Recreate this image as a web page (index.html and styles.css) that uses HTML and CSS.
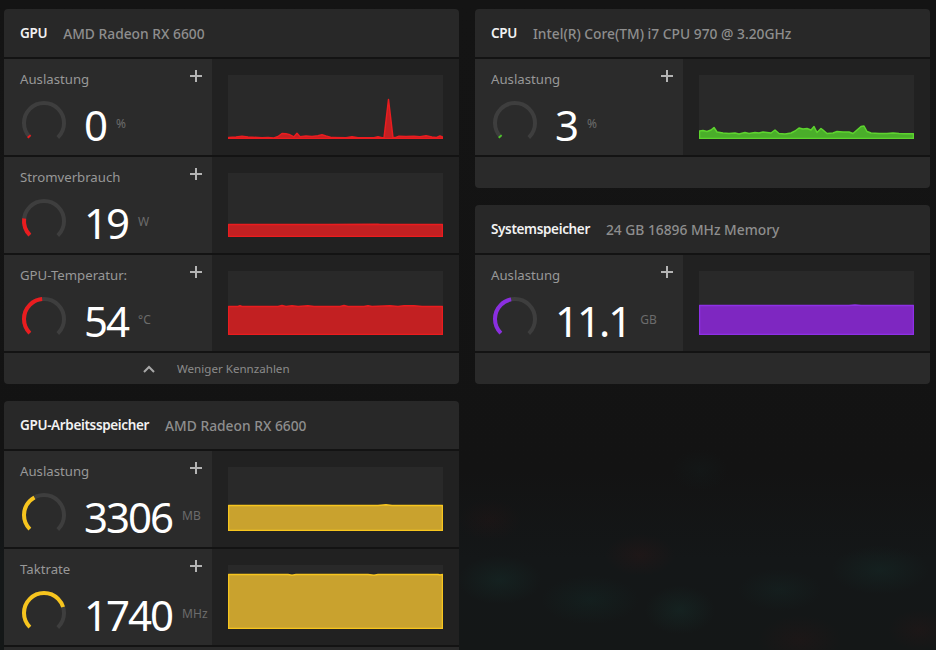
FILE: index.html
```html
<!DOCTYPE html>
<html lang="de">
<head>
<meta charset="utf-8">
<title>Leistung</title>
<link rel="stylesheet" href="styles.css">
</head>
<body>
<div class="dash">
  <div class="col">
    <section class="card">
      <header class="card-head"><span class="title">GPU</span><span class="sub">AMD Radeon RX 6600</span></header>
      <div class="metric red">
        <div class="m-left">
          <div class="m-top"><span class="m-label">Auslastung</span><svg class="plus" viewBox="0 0 12 12"><path d="M6 0v12M0 6h12"/></svg></div>
          <div class="m-val">
            <svg class="gauge" viewBox="0 0 48 48"><circle class="track" cx="24" cy="24" r="20"/><circle class="val" cx="24" cy="24" r="20" style="stroke-dasharray: 2 200"/></svg>
            <span class="num">0</span><span class="unit">%</span>
          </div>
        </div>
        <div class="m-chart"><div class="plot"><svg viewBox="0 0 215 64" preserveAspectRatio="none"><path class="area" d="M0.5,63.5 L0.5,62.5 L8,62 L14,61.3 L20,62 L34,62.8 L40,62.5 L46,63 L50,61.5 L54,58.5 L58,58.8 L62,59.8 L66,61.8 L69,58.3 L72,61.8 L78,61 L84,61.4 L90,60.8 L94,59.8 L98,61 L104,62.6 L118,62.8 L124,61.8 L130,62.8 L146,62.8 L150,61.8 L154,62.8 L156,62.8 L160.5,24.5 L165,62.8 L167,62.6 L171,61.2 L178,61.6 L186,61.2 L192,61.8 L198,60.8 L204,62 L208,62.6 L212,61 L214.5,62 L214.5,63.5 Z"/></svg></div></div>
      </div>
      <div class="metric red">
        <div class="m-left">
          <div class="m-top"><span class="m-label">Stromverbrauch</span><svg class="plus" viewBox="0 0 12 12"><path d="M6 0v12M0 6h12"/></svg></div>
          <div class="m-val">
            <svg class="gauge" viewBox="0 0 48 48"><circle class="track" cx="24" cy="24" r="20"/><circle class="val" cx="24" cy="24" r="20" style="stroke-dasharray: 18 200"/></svg>
            <span class="num">19</span><span class="unit">W</span>
          </div>
        </div>
        <div class="m-chart"><div class="plot"><svg viewBox="0 0 215 64" preserveAspectRatio="none"><path class="area" d="M0.5,63.5 L0.5,51.5 L60,51.5 L100,51.5 L150,51.2 L152,51.5 L214.5,51.5 L214.5,63.5 Z"/></svg></div></div>
      </div>
      <div class="metric red">
        <div class="m-left">
          <div class="m-top"><span class="m-label">GPU-Temperatur:</span><svg class="plus" viewBox="0 0 12 12"><path d="M6 0v12M0 6h12"/></svg></div>
          <div class="m-val">
            <svg class="gauge" viewBox="0 0 48 48"><circle class="track" cx="24" cy="24" r="20"/><circle class="val" cx="24" cy="24" r="20" style="stroke-dasharray: 45 200"/></svg>
            <span class="num">54</span><span class="unit">°C</span>
          </div>
        </div>
        <div class="m-chart"><div class="plot"><svg viewBox="0 0 215 64" preserveAspectRatio="none"><path class="area" d="M0.5,63.5 L0.5,35.5 L10,35.5 L12,34.8 L14,35.5 L50,35.5 L54,34.6 L58,35.5 L64,34.7 L70,35.5 L80,34.8 L86,35.5 L112,35.5 L116,34.6 L120,35.5 L136,35.5 L140,34.7 L144,35.5 L162,34.8 L170,35.5 L176,34.7 L186,34.8 L194,35.5 L214.5,35.5 L214.5,63.5 Z"/></svg></div></div>
      </div>
      <div class="card-foot more">
        <svg class="chev" viewBox="0 0 12 8"><path d="M1 7l5-5 5 5"/></svg>
        <span class="more-text">Weniger Kennzahlen</span>
      </div>
    </section>

    <section class="card">
      <header class="card-head"><span class="title">GPU-Arbeitsspeicher</span><span class="sub">AMD Radeon RX 6600</span></header>
      <div class="metric yellow">
        <div class="m-left">
          <div class="m-top"><span class="m-label">Auslastung</span><svg class="plus" viewBox="0 0 12 12"><path d="M6 0v12M0 6h12"/></svg></div>
          <div class="m-val">
            <svg class="gauge" viewBox="0 0 48 48"><circle class="track" cx="24" cy="24" r="20"/><circle class="val" cx="24" cy="24" r="20" style="stroke-dasharray: 37 200"/></svg>
            <span class="num">3306</span><span class="unit">MB</span>
          </div>
        </div>
        <div class="m-chart"><div class="plot"><svg viewBox="0 0 215 64" preserveAspectRatio="none"><path class="area" d="M0.5,63.5 L0.5,38.5 L150,38.5 L158,37.8 L164,38.5 L214.5,38.5 L214.5,63.5 Z"/></svg></div></div>
      </div>
      <div class="metric yellow">
        <div class="m-left">
          <div class="m-top"><span class="m-label">Taktrate</span><svg class="plus" viewBox="0 0 12 12"><path d="M6 0v12M0 6h12"/></svg></div>
          <div class="m-val">
            <svg class="gauge" viewBox="0 0 48 48"><circle class="track" cx="24" cy="24" r="20"/><circle class="val" cx="24" cy="24" r="20" style="stroke-dasharray: 72 200"/></svg>
            <span class="num">1740</span><span class="unit">MHz</span>
          </div>
        </div>
        <div class="m-chart"><div class="plot"><svg viewBox="0 0 215 64" preserveAspectRatio="none"><path class="area" d="M0.5,63.5 L0.5,9.5 L60,9.5 L64,10.2 L68,9.5 L140,9.5 L146,10.2 L150,9.5 L210,9.5 L212,10 L214.5,9.5 L214.5,63.5 Z"/></svg></div></div>
      </div>
      <div class="card-foot"></div>
    </section>
  </div>

  <div class="col">
    <section class="card">
      <header class="card-head"><span class="title">CPU</span><span class="sub">Intel(R) Core(TM) i7 CPU 970 @ 3.20GHz</span></header>
      <div class="metric green">
        <div class="m-left">
          <div class="m-top"><span class="m-label">Auslastung</span><svg class="plus" viewBox="0 0 12 12"><path d="M6 0v12M0 6h12"/></svg></div>
          <div class="m-val">
            <svg class="gauge" viewBox="0 0 48 48"><circle class="track" cx="24" cy="24" r="20"/><circle class="val" cx="24" cy="24" r="20" style="stroke-dasharray: 2 200"/></svg>
            <span class="num">3</span><span class="unit">%</span>
          </div>
        </div>
        <div class="m-chart"><div class="plot"><svg viewBox="0 0 215 64" preserveAspectRatio="none"><path class="area" d="M0.5,63.5 L0.5,56 L4,55.5 L8,56.5 L12,55 L15,52.5 L18,57 L24,58 L30,58.5 L36,58 L40,59 L46,57.5 L50,58.5 L56,57.5 L60,58 L64,57 L72,58 L76,55 L80,58.5 L86,59 L92,58 L96,56 L100,53 L104,54 L108,53.5 L112,55 L115,51.5 L118,57.5 L122,53.5 L124,55 L128,58.5 L134,58 L138,56.5 L144,57 L150,57 L154,58.5 L158,55 L162,51.5 L165,51 L168,56.5 L172,58 L180,58.5 L188,58.5 L194,58 L200,58.5 L206,58.8 L214.5,58.8 L214.5,63.5 Z"/></svg></div></div>
      </div>
      <div class="card-foot"></div>
    </section>

    <section class="card">
      <header class="card-head"><span class="title">Systemspeicher</span><span class="sub">24 GB 16896 MHz Memory</span></header>
      <div class="metric purple">
        <div class="m-left">
          <div class="m-top"><span class="m-label">Auslastung</span><svg class="plus" viewBox="0 0 12 12"><path d="M6 0v12M0 6h12"/></svg></div>
          <div class="m-val">
            <svg class="gauge" viewBox="0 0 48 48"><circle class="track" cx="24" cy="24" r="20"/><circle class="val" cx="24" cy="24" r="20" style="stroke-dasharray: 43 200"/></svg>
            <span class="num">11.1</span><span class="unit">GB</span>
          </div>
        </div>
        <div class="m-chart"><div class="plot"><svg viewBox="0 0 215 64" preserveAspectRatio="none"><path class="area" d="M0.5,63.5 L0.5,34.5 L150,34.5 L156,34.1 L162,34.5 L214.5,34.5 L214.5,63.5 Z"/></svg></div></div>
      </div>
      <div class="card-foot"></div>
    </section>
  </div>
</div>
</body>
</html>
```

FILE: styles.css
```css
html, body {
  margin: 0;
  height: 100%;
}

body {
  background-color: #131313;
  background-image:
    radial-gradient(ellipse 60px 35px at 500px 580px, rgba(22, 70, 62, 0.22), transparent 70%),
    radial-gradient(ellipse 70px 35px at 590px 600px, rgba(18, 62, 56, 0.2), transparent 70%),
    radial-gradient(ellipse 50px 35px at 680px 610px, rgba(24, 72, 64, 0.22), transparent 70%),
    radial-gradient(ellipse 60px 30px at 780px 590px, rgba(22, 66, 60, 0.16), transparent 70%),
    radial-gradient(ellipse 70px 35px at 880px 570px, rgba(22, 70, 62, 0.2), transparent 70%),
    radial-gradient(ellipse 50px 30px at 640px 555px, rgba(70, 22, 22, 0.2), transparent 70%),
    radial-gradient(ellipse 60px 35px at 800px 640px, rgba(70, 22, 22, 0.16), transparent 70%),
    radial-gradient(ellipse 45px 30px at 490px 520px, rgba(60, 20, 20, 0.16), transparent 70%),
    radial-gradient(ellipse 45px 30px at 920px 630px, rgba(70, 22, 22, 0.16), transparent 70%),
    radial-gradient(ellipse 40px 30px at 700px 470px, rgba(20, 40, 40, 0.18), transparent 70%),
    linear-gradient(to bottom, #141414 0, #131313 470px, #141718 560px, #141717 650px);
  font-family: "Noto Sans", "Open Sans", sans-serif;
  color: #e8e8e8;
  overflow: hidden;
}

.dash {
  display: flex;
  gap: 16px;
  padding: 9px 6px 0 4px;
}

.col {
  width: 455px;
  display: flex;
  flex-direction: column;
  gap: 17px;
}

.card {
  display: flex;
  flex-direction: column;
  gap: 2px;
  background: #131313;
  border-radius: 4px;
  overflow: hidden;
}

.card-head {
  height: 48px;
  background: #282828;
  display: flex;
  align-items: center;
  padding: 0 16px;
  gap: 16px;
  font-weight: 600;
}

.title {
  color: #f2f2f2;
  font-size: 13.5px;
  letter-spacing: -0.35px;
}

.sub {
  color: #8e8e8e;
  font-size: 13.8px;
  font-weight: 500;
}

.metric {
  height: 96px;
  display: flex;
}

.m-left {
  width: 208px;
  box-sizing: border-box;
  background: #2b2b2b;
  padding: 11px 10px 0 16px;
}

.m-top {
  display: flex;
  justify-content: space-between;
  align-items: flex-start;
  height: 18px;
}

.m-label {
  font-size: 13.2px;
  line-height: 18px;
  color: #989898;
}

.plus {
  width: 12px;
  height: 12px;
}

.plus path {
  stroke: #b4b4b4;
  stroke-width: 2;
  fill: none;
}

.m-val {
  display: flex;
  align-items: center;
  margin-top: 11px;
  height: 48px;
}

.gauge {
  width: 48px;
  height: 48px;
  flex: none;
}

.gauge circle {
  fill: none;
  stroke-width: 4;
  transform: rotate(135deg);
  transform-origin: 24px 24px;
}

.gauge .track {
  stroke: #3e3e3e;
  stroke-dasharray: 94.25 200;
}

.num {
  margin-left: 16px;
  margin-top: 4px;
  font-size: 42px;
  line-height: 42px;
  font-weight: 400;
  letter-spacing: -2px;
  color: #ffffff;
}

.unit {
  margin-left: 10px;
  font-size: 12px;
  color: #6c6c6c;
}

.m-chart {
  flex: 1;
  background: #212121;
  padding: 16px;
}

.plot {
  height: 64px;
  background: #292929;
}

.plot svg {
  display: block;
  width: 100%;
  height: 100%;
}

.area {
  stroke-width: 1.5;
  stroke-linejoin: round;
}

.red .val { stroke: #ea1c1f; }
.red .area { fill: #c22022; stroke: #ea1c1f; }

.yellow .val { stroke: #f7c51e; }
.yellow .area { fill: #c9a22e; stroke: #f7c51e; }

.green .val { stroke: #4ec52a; }
.green .area { fill: #4aae2a; stroke: #5dd42e; }

.purple .val { stroke: #8a2ee0; }
.purple .area { fill: #7e27c1; stroke: #8e30e6; }

.card-foot {
  height: 31px;
  background: #2a2a2a;
}

.more {
  display: flex;
  align-items: center;
  padding-left: 139px;
  gap: 22px;
}

.chev {
  width: 12px;
  height: 8px;
}

.chev path {
  fill: none;
  stroke: #a8a8a8;
  stroke-width: 2;
}

.more-text {
  font-size: 11.6px;
  color: #8a8a8a;
}
```
